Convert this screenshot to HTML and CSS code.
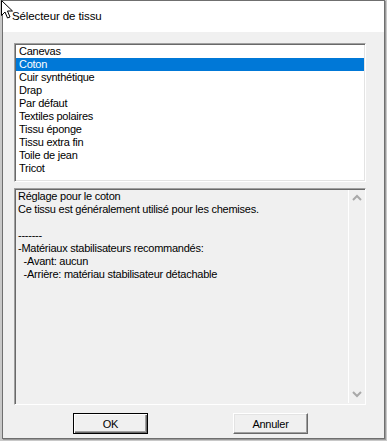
FILE: index.html
```html
<!DOCTYPE html>
<html lang="fr">
<head>
    <meta charset="UTF-8">
    <title>Sélecteur de tissu</title>
    <link rel="stylesheet" href="styles.css">
</head>
<body>
    <div class="window">
        <div class="titlebar">Sélecteur de tissu</div>
        <div class="content">
            <ul class="listbox">
                <li>Canevas</li>
                <li class="selected">Coton</li>
                <li>Cuir synthétique</li>
                <li>Drap</li>
                <li>Par défaut</li>
                <li>Textiles polaires</li>
                <li>Tissu éponge</li>
                <li>Tissu extra fin</li>
                <li>Toile de jean</li>
                <li>Tricot</li>
            </ul>

            <div class="memo">
                <div class="memo-text">Réglage pour le coton
Ce tissu est généralement utilisé pour les chemises.

-------
-Matériaux stabilisateurs recommandés:
  -Avant: aucun
  -Arrière: matériau stabilisateur détachable</div>
                <div class="scrollbar">
                    <svg width="16" height="10" viewBox="0 0 16 10"><path d="M4 7 L8 3 L12 7" fill="none" stroke="#a9a9a9" stroke-width="2"/></svg>
                    <svg width="16" height="10" viewBox="0 0 16 10"><path d="M4 3 L8 7 L12 3" fill="none" stroke="#a9a9a9" stroke-width="2"/></svg>
                </div>
            </div>

            <div class="buttons">
                <button class="btn btn-default">OK</button>
                <button class="btn">Annuler</button>
            </div>
        </div>
    </div>

    <!-- mouse pointer over the title bar -->
    <svg class="cursor" width="14" height="20" viewBox="0 0 14 20">
        <path d="M0.5 0.5 L0.5 15.5 L4 12 L6.5 18 L9 17 L6.5 11 L11.5 11 Z" fill="#fff" stroke="#000" stroke-width="1"/>
    </svg>
</body>
</html>
```

FILE: styles.css
```css
body {
    margin: 0;
    background-color: #c8c8c8;
    font-family: "Liberation Sans", Arial, sans-serif;
    font-size: 11px;
    letter-spacing: -0.25px;
    color: #000;
    width: 387px;
    height: 441px;
    overflow: hidden;
}
.window {
    box-sizing: border-box;
    width: 383px;
    height: 439px;
    margin-left: 2px;
    border: 1px solid #6f6f6f;
    background-color: #f0f0f0;
    box-shadow: 1px 1px 0 #9a9a9a;
}
.titlebar {
    height: 31px;
    line-height: 31px;
    padding-left: 9px;
    background-color: #fff;
    font-size: 11.5px;
    letter-spacing: -0.1px;
}
.content {
    padding: 11px 0 0 11px;
}
.listbox {
    box-sizing: border-box;
    width: 352px;
    height: 139px;
    margin: 0;
    padding: 1px 1px 5px 1px;
    list-style: none;
    background-color: #fff;
    border: 1px solid;
    border-color: #a0a0a0 #fff #fff #a0a0a0;
    box-shadow: inset 1px 1px 0 #696969, inset -1px -1px 0 #e3e3e3;
}
.listbox li {
    height: 13px;
    line-height: 13px;
    padding-left: 3px;
    white-space: nowrap;
}
.listbox li.selected {
    background-color: #0078d7;
    color: #fff;
}
.memo {
    box-sizing: border-box;
    display: flex;
    width: 352px;
    height: 217px;
    margin-top: 6px;
    padding: 1px 0 1px 1px;
    border: 1px solid;
    border-color: #a0a0a0 #fff #fff #a0a0a0;
    box-shadow: inset 1px 1px 0 #696969;
}
.memo-text {
    flex: 1;
    padding-left: 2px;
    line-height: 13px;
    white-space: pre;
}
.scrollbar {
    width: 16px;
    border-left: 1px solid #fff;
    display: flex;
    flex-direction: column;
    justify-content: space-between;
    padding: 3px 0 4px;
}
.buttons {
    display: flex;
    gap: 85px;
    margin-top: 8px;
    padding-left: 59px;
}
.btn {
    box-sizing: border-box;
    width: 75px;
    height: 21px;
    padding: 0;
    font-family: "Liberation Sans", Arial, sans-serif;
    font-size: 11px;
    letter-spacing: -0.25px;
    color: #000;
    background-color: #f0f0f0;
    border: 1px solid;
    border-color: #fff #696969 #696969 #fff;
    box-shadow: inset -1px -1px 0 #a0a0a0, inset 1px 1px 0 #e3e3e3;
}
.btn-default {
    border-color: #000;
    box-shadow: inset 1px 1px 0 #fff, inset -1px -1px 0 #696969, inset -2px -2px 0 #a0a0a0;
}
.cursor {
    position: absolute;
    top: 0;
    left: 1px;
}
```
